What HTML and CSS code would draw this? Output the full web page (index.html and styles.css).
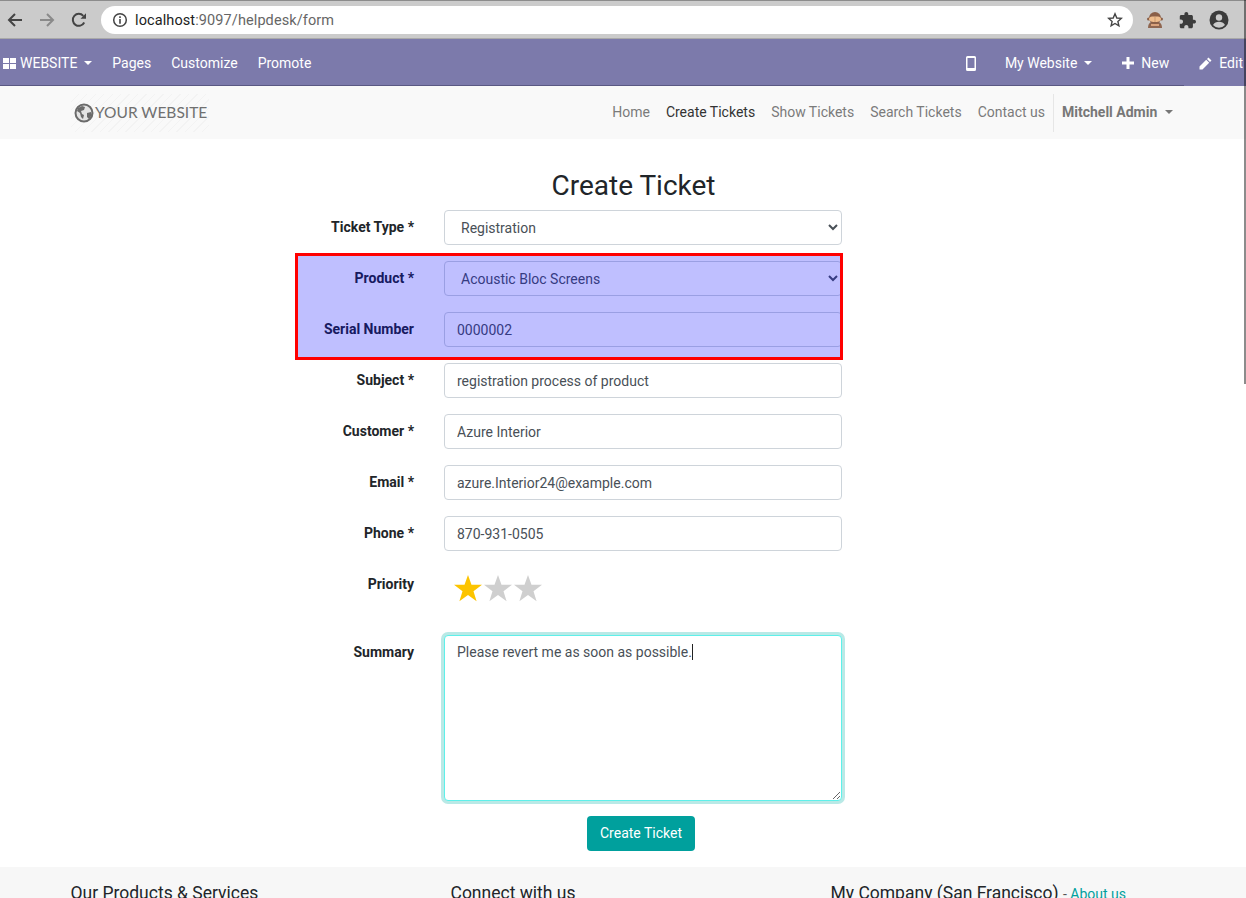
FILE: index.html
```html
<!DOCTYPE html>
<html lang="en">
<head>
    <meta charset="UTF-8">
    <meta name="viewport" content="width=device-width, initial-scale=1.0">
    <title>Create Ticket</title>
    <link rel="stylesheet" href="styles.css">
</head>
<body>
    <div class="chrome">
        <svg class="chrome-icon" width="16" height="16" viewBox="0 0 16 16"><path d="M15 8H2.5M8 2L2 8l6 6" fill="none" stroke="#444" stroke-width="2"/></svg>
        <svg class="chrome-icon fwd" width="16" height="16" viewBox="0 0 16 16"><path d="M1 8h12.5M8 2l6 6-6 6" fill="none" stroke="#8a8a8a" stroke-width="2"/></svg>
        <svg class="chrome-icon reload" width="16" height="16" viewBox="0 0 16 16"><path d="M13.2 10.5A6 6 0 1 1 12.3 3.8" fill="none" stroke="#444" stroke-width="2"/><path d="M9.5 6.8H15V1.3z" fill="#444"/></svg>
        <div class="omnibox">
            <svg width="16" height="16" viewBox="0 0 16 16"><circle cx="8" cy="8" r="6.3" fill="none" stroke="#444" stroke-width="1.5"/><path d="M7.2 4.3h1.6v1.600H7.2zM7.2 7h1.6v4.7H7.2z" fill="#444"/></svg>
            <span class="url"><b>localhost</b>:9097/helpdesk/form</span>
            <svg class="star" width="16" height="16" viewBox="0 0 16 16"><path d="M8 1.800l1.800 4.200 4.500.4-3.400 3 1 4.400L8 11.500l-3.900 2.300 1-4.400-3.400-3 4.500-.4z" fill="none" stroke="#444" stroke-width="1.4"/></svg>
        </div>
        <svg class="ext monkey" width="18" height="16" viewBox="0 0 18 16"><path d="M2 16c0-3 1-5 3-6h8c2 1 3 3 3 6z" fill="#8f6650"/><circle cx="9" cy="6" r="6" fill="#8a5f48"/><circle cx="2.500" cy="7" r="1.500" fill="#8a5f48"/><circle cx="15.500" cy="7" r="1.500" fill="#8a5f48"/><path d="M3 7c0-1.500 1.500-2.500 3-2.500h6c1.500 0 3 1 3 2.500s-1.500 3-6 3-6-1.500-6-3z" fill="#efbd8d"/><path d="M5 12h8v2H5z" fill="#d9a27c"/><path d="M9 5v5" stroke="#b98a66" stroke-width=".7"/></svg>
        <svg class="ext puzzle" width="17" height="17" viewBox="1 1 22 22"><path d="M20.5 11H19V7c0-1.100-.9-2-2-2h-4V3.500C13 2.120 11.880 1 10.500 1S8 2.120 8 3.500V5H4c-1.100 0-2 .9-2 2v3.800h1.500c1.490 0 2.700 1.210 2.700 2.700s-1.210 2.700-2.700 2.700H2V20c0 1.100.9 2 2 2h3.800v-1.500c0-1.490 1.210-2.700 2.700-2.700s2.700 1.210 2.700 2.700V22H17c1.100 0 2-.9 2-2v-4h1.500c1.380 0 2.500-1.120 2.500-2.500S21.880 11 20.500 11z" fill="#3c3c3c"/></svg>
        <svg class="ext avatar" width="20" height="20" viewBox="0 0 20 20"><circle cx="10" cy="10" r="9.500" fill="#3c3c3c"/><circle cx="10" cy="7.500" r="3.200" fill="#cbcbcb"/><path d="M4 15c1.200-2.500 3.500-3.300 6-3.300s4.800.8 6 3.300a8 8 0 0 1-12 0z" fill="#cbcbcb"/></svg>
    </div>

    <div class="adminbar">
        <svg class="apps" width="13" height="11" viewBox="0 0 13 11"><path d="M0 0h6v5H0zM7 0h6v5H7zM0 6h6v5H0zM7 6h6v5H7z" fill="#fff"/></svg>
        <span class="admin-link brand">WEBSITE<i class="caret"></i></span>
        <span class="admin-link">Pages</span>
        <span class="admin-link">Customize</span>
        <span class="admin-link">Promote</span>
        <span class="spacer"></span>
        <svg class="mobile" width="10" height="15" viewBox="0 0 10 15"><path d="M1.500 0h7A1.500 1.500 0 0 1 10 1.500v12A1.500 1.500 0 0 1 8.500 15h-7A1.500 1.500 0 0 1 0 13.500v-12A1.500 1.500 0 0 1 1.500 0zM1.500 2v10h7V2z" fill="#fff" fill-rule="evenodd"/></svg>
        <span class="admin-link mywebsite">My Website<i class="caret"></i></span>
        <svg class="plus" width="12" height="12" viewBox="0 0 12 12"><path d="M4.500 0h3v4.500H12v3H7.500V12h-3V7.500H0v-3h4.500z" fill="#fff"/></svg>
        <span class="admin-link new">New</span>
        <svg class="pencil" width="13" height="13" viewBox="0 0 13 13"><path d="M9.500.5l3 3-1.500 1.500-3-3zM7.200 2.800l3 3-6.700 6.700H.5v-3z" fill="#fff"/></svg>
        <span class="admin-link edit">Edit</span>
    </div>

    <nav class="sitenav">
        <div class="logo">
            <svg width="20" height="20" viewBox="0 0 20 20"><circle cx="10" cy="10" r="8.500" fill="#e4e4e4" stroke="#6b6b6b" stroke-width="2"/><path d="M4 5l4-2 3 1-1 3-3 1 1 3 2 1-1 4-2-2-1-4-3-2zM13 10l4-1 1 3-3 4-2-2z" fill="#6b6b6b"/></svg>
            <span class="logo-text">YOUR WEBSITE</span>
        </div>
        <div class="nav-links">
            <span>Home</span>
            <span class="active">Create Tickets</span>
            <span>Show Tickets</span>
            <span>Search Tickets</span>
            <span>Contact us</span>
        </div>
        <div class="nav-user">Mitchell Admin<i class="caret grey"></i></div>
    </nav>

    <main class="content">
        <h1>Create Ticket</h1>
        <form class="ticket-form">
            <div class="highlight"></div>
            <div class="row">
                <label>Ticket Type *</label>
                <select class="field"><option>Registration</option></select>
            </div>
            <div class="row">
                <label>Product *</label>
                <select class="field"><option>Acoustic Bloc Screens</option></select>
            </div>
            <div class="row">
                <label>Serial Number</label>
                <input class="field" type="text" value="0000002">
            </div>
            <div class="row">
                <label>Subject *</label>
                <input class="field" type="text" value="registration process of product">
            </div>
            <div class="row">
                <label>Customer *</label>
                <input class="field" type="text" value="Azure Interior">
            </div>
            <div class="row">
                <label>Email *</label>
                <input class="field" type="text" value="azure.Interior24@example.com">
            </div>
            <div class="row">
                <label>Phone *</label>
                <input class="field" type="text" value="870-931-0505">
            </div>
            <div class="row priority">
                <label>Priority</label>
                <div class="stars">
                    <svg width="30" height="28" viewBox="0 0 30 28"><path d="M15 1l3.500 9.800H29l-8.500 6.400 3.100 10L15 21l-8.600 6.200 3.100-10L1 10.800h10.500z" fill="#fcc400"/></svg>
                    <svg width="30" height="28" viewBox="0 0 30 28"><path d="M15 1l3.500 9.800H29l-8.500 6.400 3.100 10L15 21l-8.600 6.200 3.100-10L1 10.800h10.500z" fill="#cfcfcf"/></svg>
                    <svg width="30" height="28" viewBox="0 0 30 28"><path d="M15 1l3.500 9.800H29l-8.500 6.400 3.100 10L15 21l-8.600 6.200 3.100-10L1 10.800h10.500z" fill="#cfcfcf"/></svg>
                </div>
            </div>
            <div class="row summary">
                <label>Summary</label>
                <div class="textarea-wrap">
                    <textarea class="field area">Please revert me as soon as possible.</textarea>
                    <span class="cursor"></span>
                </div>
            </div>
            <div class="submit-row">
                <button type="button" class="btn">Create Ticket</button>
            </div>
        </form>
    </main>

    <footer class="footer">
        <h5 class="col-one">Our Products &amp; Services</h5>
        <h5 class="col-two">Connect with us</h5>
        <h5 class="col-three">My Company (San Francisco) <small>- <a>About us</a></small></h5>
    </footer>

    <div class="scrollbar"></div>
</body>
</html>
```

FILE: styles.css
```css
* {
    box-sizing: border-box;
}
html, body {
    height: 898px;
    margin: 0;
    overflow: hidden;
}
body {
    font-family: Roboto, sans-serif;
    font-size: 14px;
    color: #212529;
    background: #fff;
}

/* browser toolbar */
.chrome {
    height: 39px;
    display: flex;
    align-items: center;
    background: #cbcbcb;
    border-top: 1px solid #8c8c8c;
    border-bottom: 1px solid #a9a9a9;
    padding: 1px 0 0 7px;
}
.chrome-icon.fwd {
    margin-left: 16px;
}
.chrome-icon.reload {
    margin-left: 16px;
}
.omnibox {
    width: 1032px;
    height: 28px;
    margin-left: 14px;
    background: #fff;
    border-radius: 14px;
    display: flex;
    align-items: center;
    padding: 0 10px 0 11px;
}
.url {
    flex: 1;
    margin-left: 7px;
    font-size: 14.5px;
    letter-spacing: 0.1px;
    color: #666;
}
.url b {
    font-weight: 400;
    color: #222;
}
.ext.monkey {
    margin-left: 13px;
}
.ext.puzzle {
    margin-left: 15px;
}
.ext.avatar {
    margin-left: 13px;
}

/* admin bar */
.adminbar {
    position: relative;
    height: 47px;
    display: flex;
    align-items: center;
    background: #7c7aab;
    color: #fff;
    padding: 1px 0 0 3px;
}
.adminbar::after {
    content: "";
    position: absolute;
    left: 0;
    bottom: 0;
    width: 1184px;
    height: 1px;
    background: #5a5883;
}
.apps {
    margin-right: 4px;
}
.admin-link {
    color: #fff;
    margin-left: 20px;
    white-space: nowrap;
}
.admin-link.brand {
    margin-left: 0;
}
.spacer {
    flex: 1;
}
.caret {
    display: inline-block;
    width: 0;
    height: 0;
    margin-left: 7px;
    vertical-align: 3px;
    border-top: 4px solid #fff;
    border-left: 4px solid transparent;
    border-right: 4px solid transparent;
}
.caret.grey {
    border-top-color: #777;
    margin-left: 8px;
}
.admin-link.mywebsite {
    margin-left: 29px;
}
.plus {
    margin-left: 30px;
}
.admin-link.new {
    margin-left: 7px;
}
.pencil {
    margin-left: 30px;
}
.admin-link.edit {
    margin-left: 7px;
    margin-right: 3px;
}

/* site navbar */
.sitenav {
    height: 53px;
    display: flex;
    align-items: center;
    background: #f9f9f9;
    padding-left: 71px;
}
.logo {
    width: 138px;
    height: 38px;
    flex: none;
    display: flex;
    align-items: center;
    padding-left: 3px;
    gap: 1px;
    color: #707070;
    font-family: Lato, sans-serif;
    font-size: 15.5px;
    white-space: nowrap;
    background: repeating-linear-gradient(135deg, #f9f9f9 0 5px, #f3f3f3 5px 6px);
}
.logo svg {
    flex: none;
}
.logo-text {
    margin-bottom: 2px;
}
.nav-links {
    margin-left: auto;
    margin-bottom: 2px;
    display: flex;
    gap: 16px;
    color: #7b7b7b;
}
.nav-links .active {
    color: #333;
}
.nav-user {
    height: 38px;
    width: 193px;
    margin-left: 8px;
    padding-left: 8px;
    border-left: 1px solid #e6e6e6;
    font-weight: 700;
    color: #777;
    line-height: 36px;
}

/* form */
.content {
    height: 728px;
    padding-top: 30px;
}
h1 {
    margin: 0 0 7px 0;
    width: 1267px;
    text-align: center;
    font-size: 28px;
    font-weight: 400;
    line-height: 34px;
}
.ticket-form {
    position: relative;
    width: 560px;
    margin-left: 282px;
}
.highlight {
    position: absolute;
    left: 13px;
    top: 43px;
    width: 548px;
    height: 107px;
    background: rgba(0, 0, 255, 0.25);
    border: 3px solid #f00;
    z-index: 2;
    pointer-events: none;
}
.row {
    display: flex;
    margin-bottom: 16px;
}
.row label {
    width: 132px;
    flex: none;
    text-align: right;
    font-weight: 700;
    padding-top: 9px;
    line-height: 17px;
}
.field {
    flex: 1;
    height: 35px;
    margin-left: 30px;
    border: 1px solid #ced4da;
    border-radius: 4px;
    padding: 0 12px;
    font-family: Roboto, sans-serif;
    font-size: 14px;
    color: #495057;
    background: #fff;
    min-width: 0;
}
.row.priority {
    height: 52px;
    margin-bottom: 16px;
}
.stars {
    display: flex;
    margin-left: 39px;
    height: 28px;
    margin-top: 7px;
}
.stars svg {
    display: block;
}
.row.summary {
    margin-bottom: 15px;
}
.textarea-wrap {
    position: relative;
    margin-left: 30px;
    flex: 1;
}
.field.area {
    display: block;
    width: 100%;
    height: 166px;
    margin: 0;
    padding: 8px 12px;
    line-height: 17px;
    border-color: #5ef0ea;
    box-shadow: 0 0 0 3px #b9e9e6;
    outline: none;
}
.cursor {
    position: absolute;
    left: 248px;
    top: 9px;
    width: 1px;
    height: 16px;
    background: #222;
}
.submit-row {
    margin-left: 305px;
}
.btn {
    width: 108px;
    height: 35px;
    border: none;
    border-radius: 4px;
    padding: 0 0 2px 0;
    background: #00a09d;
    color: #fff;
    font-family: Roboto, sans-serif;
    font-size: 14px;
}

/* footer */
.footer {
    height: 31px;
    overflow: hidden;
    display: flex;
    background: #f7f7f7;
    padding: 16px 0 0 70.5px;
}
h5 {
    margin: 0;
    font-size: 17.5px;
    font-weight: 400;
    line-height: 21px;
    white-space: nowrap;
}
.col-one {
    width: 380px;
}
.col-two {
    width: 380px;
}
.col-three small {
    font-size: 14px;
    color: #555;
}
.col-three a {
    color: #00a09d;
}

.scrollbar {
    position: fixed;
    top: 0;
    right: 0;
    width: 2px;
    height: 384px;
    background: rgba(0, 0, 0, 0.45);
    z-index: 5;
}
```
